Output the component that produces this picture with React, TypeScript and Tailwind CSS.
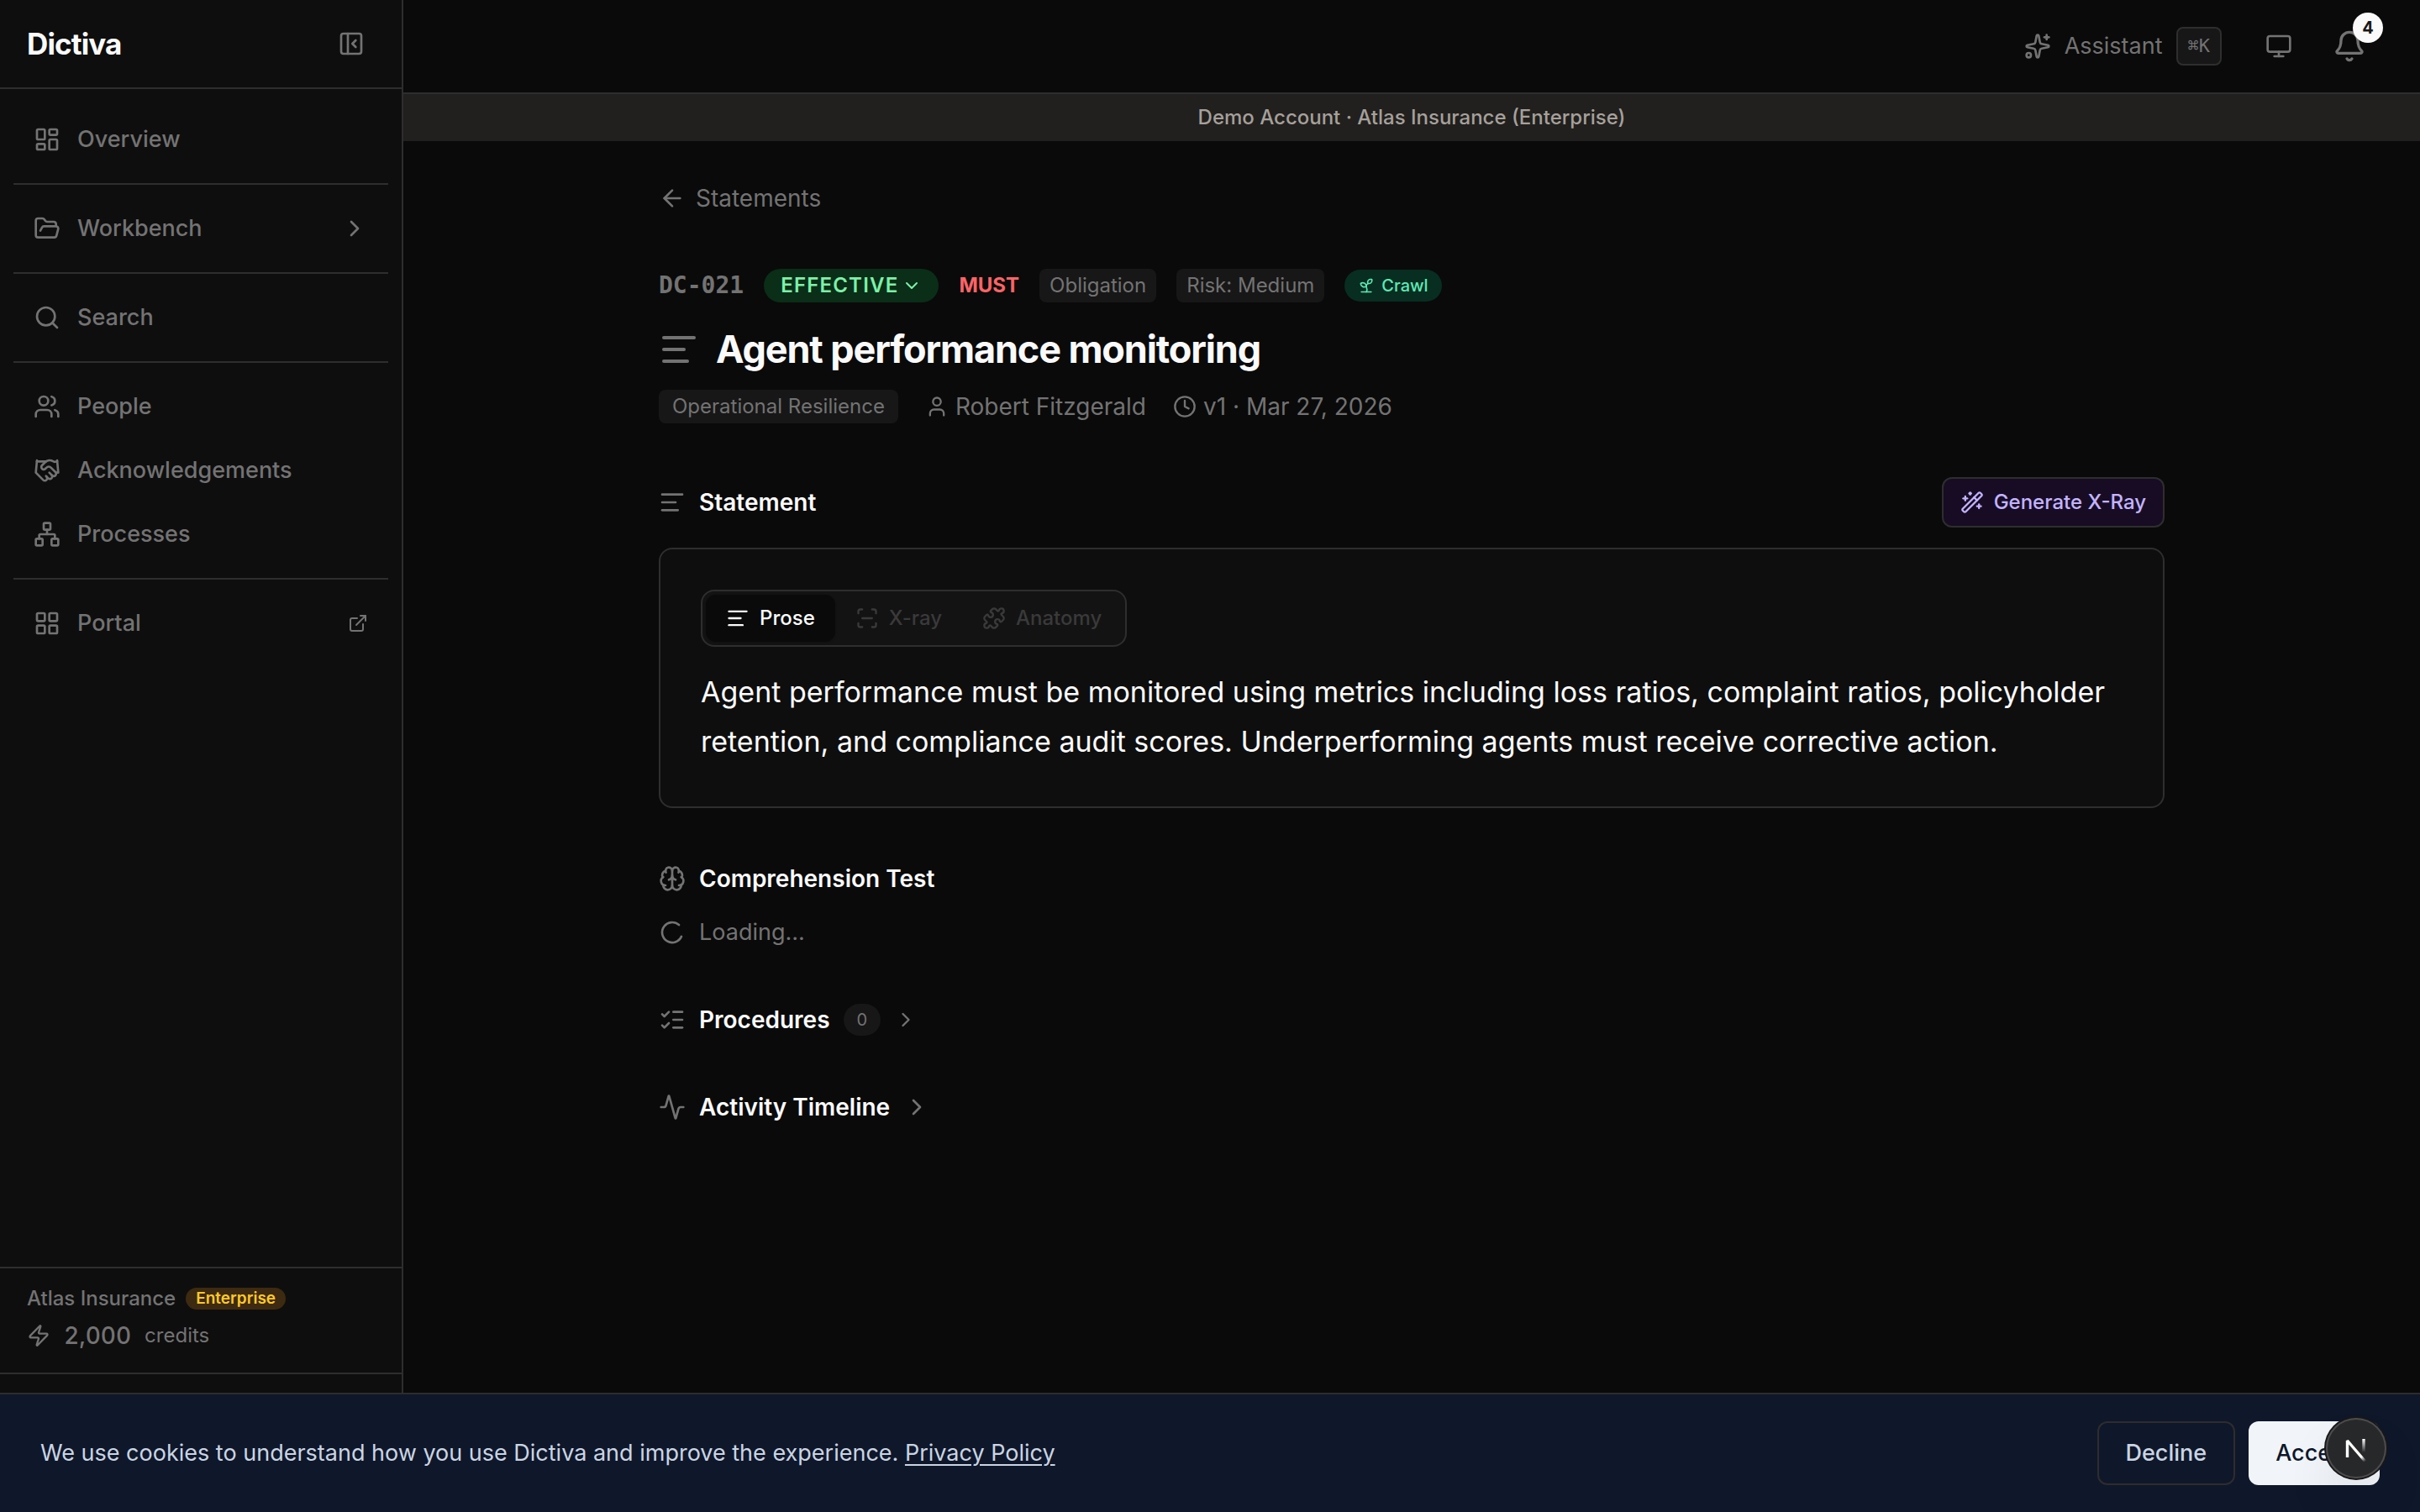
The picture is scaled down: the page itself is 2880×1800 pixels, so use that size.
import type { ReactNode } from "react";
import {
  Activity,
  ArrowLeft,
  Bell,
  Brain,
  ChevronDown,
  ChevronRight,
  Clock,
  ExternalLink,
  FolderOpen,
  Handshake,
  LayoutDashboard,
  LayoutGrid,
  ListChecks,
  LoaderCircle,
  Monitor,
  Network,
  PanelLeftClose,
  Puzzle,
  ScanLine,
  Search,
  Sparkles,
  Sprout,
  TextAlignStart,
  User,
  Users,
  WandSparkles,
  Zap,
  type LucideIcon,
} from "lucide-react";

type NavItem = { label: string; icon: LucideIcon; trailing?: ReactNode };

const navGroups: NavItem[][] = [
  [{ label: "Overview", icon: LayoutDashboard }],
  [{ label: "Workbench", icon: FolderOpen, trailing: <ChevronRight className="size-8" /> }],
  [{ label: "Search", icon: Search }],
  [
    { label: "People", icon: Users },
    { label: "Acknowledgements", icon: Handshake },
    { label: "Processes", icon: Network },
  ],
  [{ label: "Portal", icon: LayoutGrid, trailing: <ExternalLink className="size-6" /> }],
];

const views = [
  { label: "Prose", icon: TextAlignStart, active: true },
  { label: "X-ray", icon: ScanLine, active: false },
  { label: "Anatomy", icon: Puzzle, active: false },
];

function Sidebar() {
  return (
    <aside className="flex w-[480px] shrink-0 flex-col border-r-2 border-[#2e2e2e] bg-[#0e0e0e]">
      <div className="flex h-[106px] items-center justify-between border-b-2 border-[#2e2e2e] px-8">
        <a href="#" className="text-[35px] leading-10 font-bold tracking-tight text-neutral-50">
          Dictiva
        </a>
        <button type="button" aria-label="Collapse sidebar" className="p-3">
          <PanelLeftClose className="size-8" />
        </button>
      </div>

      <nav className="flex-1 px-4 py-6 text-[27px]">
        {navGroups.map((group, i) => (
          <ul
            key={group[0].label}
            className={
              i === 0
                ? "flex flex-col gap-1"
                : "mt-4 flex flex-col gap-1 border-t-2 border-[#2e2e2e] pt-4"
            }
          >
            {group.map(({ label, icon: Icon, trailing }) => (
              <li key={label}>
                <a href="#" className="flex h-[72px] items-center gap-5 rounded-xl px-6 font-medium">
                  <Icon className="size-8" />
                  <span className="flex-1">{label}</span>
                  {trailing}
                </a>
              </li>
            ))}
          </ul>
        ))}
      </nav>

      <div className="flex flex-col gap-2 border-y-2 border-[#2e2e2e] px-8 pt-5 pb-6">
        <div className="flex items-center gap-3 text-[24px] leading-8">
          <span className="font-medium">Atlas Insurance</span>
          <span className="rounded-full bg-[#3d2a10] px-3 text-[19px] leading-[26px] font-semibold text-[#ffc928]">
            Enterprise
          </span>
        </div>
        <div className="flex items-center gap-4">
          <Zap className="size-7" />
          <span className="font-medium tabular-nums">2,000</span>
          <span className="text-[24px]">credits</span>
        </div>
      </div>
      {/* room for the cookie banner */}
      <div className="h-[164px]" />
    </aside>
  );
}

function TopBar() {
  return (
    <header className="flex h-28 items-center justify-end gap-3 border-b-2 border-[#2e2e2e] px-12">
      <button type="button" className="flex items-center gap-4 px-5 text-[27px]">
        <Sparkles className="size-8" />
        <span>Assistant</span>
        <kbd className="rounded-lg border-2 border-[#2e2e2e] bg-[#171717] px-3 font-['DejaVu_Sans_Mono',monospace] text-[22px] leading-[42px]">
          ⌘K
        </kbd>
      </button>
      <button type="button" aria-label="Theme" className="flex size-[72px] items-center justify-center">
        <Monitor className="size-8" />
      </button>
      <button
        type="button"
        aria-label="Notifications"
        className="relative flex size-[72px] items-center justify-center"
      >
        <Bell className="size-10" />
        <span className="absolute -top-1 -right-1 flex size-9 items-center justify-center rounded-full bg-neutral-50 text-[20px] font-bold text-neutral-900">
          4
        </span>
      </button>
    </header>
  );
}

function SectionHeading({ icon: Icon, children }: { icon: LucideIcon; children: ReactNode }) {
  return (
    <h2 className="flex items-center gap-4 font-semibold text-neutral-50">
      <Icon className="size-8 text-[#737373]" />
      {children}
    </h2>
  );
}

function StatementHeader() {
  return (
    <div>
      <div className="flex items-center gap-6 text-[24px]">
        <span className="font-['DejaVu_Sans_Mono',monospace] text-[28px] font-bold">DC-021</span>
        <button
          type="button"
          className="flex h-10 items-center gap-1 rounded-full bg-[#0a2e17] px-5 font-semibold tracking-wider text-green-300"
        >
          EFFECTIVE
          <ChevronDown className="size-6" />
        </button>
        <span className="font-bold text-red-400">MUST</span>
        <span className="rounded-lg bg-[#171717] px-3">Obligation</span>
        <span className="rounded-lg bg-[#171717] px-3">Risk: Medium</span>
        <span className="flex h-[38px] items-center gap-2 rounded-full bg-[#082e21] px-4 text-[20px] font-medium text-emerald-300">
          <Sprout className="size-5" />
          Crawl
        </span>
      </div>

      <div className="mt-6 flex items-center gap-5">
        <TextAlignStart className="size-12" />
        <h1 className="text-[45px] leading-[64px] font-bold tracking-tight text-neutral-50">
          Agent performance monitoring
        </h1>
      </div>

      <div className="mt-4 flex items-center gap-8">
        <span className="rounded-lg bg-[#171717] px-4 text-[24px]">Operational Resilience</span>
        <span className="flex items-center gap-2">
          <User className="size-7" />
          Robert Fitzgerald
        </span>
        <span className="flex items-center gap-2">
          <Clock className="size-7" />
          v1 · Mar 27, 2026
        </span>
      </div>
    </div>
  );
}

function StatementCard() {
  return (
    <section>
      <div className="flex items-center justify-between">
        <SectionHeading icon={TextAlignStart}>Statement</SectionHeading>
        <button
          type="button"
          className="flex h-[60px] items-center gap-3 rounded-xl border-2 border-[#2e2e2e] bg-[#170c24] px-5 text-[24px] font-medium text-violet-300"
        >
          <WandSparkles className="size-7" />
          Generate X-Ray
        </button>
      </div>

      <div className="mt-6 rounded-2xl border-2 border-[#2e2e2e] bg-[#0e0e0e] p-12">
        <div
          role="tablist"
          className="inline-flex rounded-2xl border-2 border-[#2e2e2e] bg-[#131313] p-1 align-top text-[24px] font-medium"
        >
          {views.map(({ label, icon: Icon, active }) => (
            <button
              key={label}
              type="button"
              role="tab"
              aria-selected={active}
              disabled={!active}
              className={
                active
                  ? "flex h-14 items-center gap-3 rounded-xl bg-[#0a0a0a] px-6 text-neutral-50 shadow-sm"
                  : "flex h-14 items-center gap-3 rounded-xl px-6 text-[#3a3a3a]"
              }
            >
              <Icon className="size-7" />
              {label}
            </button>
          ))}
        </div>
        <p className="mt-6 text-[34px] leading-[59px] text-neutral-50">
          Agent performance must be monitored using metrics including loss ratios, complaint ratios,
          policyholder retention, and compliance audit scores. Underperforming agents must receive
          corrective action.
        </p>
      </div>
    </section>
  );
}

function CookieBanner() {
  return (
    <div className="fixed inset-x-0 bottom-0 flex items-center justify-between border-t-2 border-[#2e2d2b] bg-slate-900 px-12 py-8 text-[27px] text-slate-300">
      <p>
        We use cookies to understand how you use Dictiva and improve the experience.{" "}
        <a href="#" className="underline underline-offset-4">
          Privacy Policy
        </a>
      </p>
      <div className="flex gap-4 font-medium">
        <button type="button" className="h-[76px] rounded-xl border-2 border-[#2e2d2b] px-8">
          Decline
        </button>
        <button type="button" className="h-[76px] rounded-xl bg-slate-100 px-8 text-slate-900">
          Accept
        </button>
      </div>
    </div>
  );
}

// Floating dev tools button
function DevIndicator() {
  return (
    <button
      type="button"
      aria-label="Open dev tools"
      className="fixed right-10 bottom-10 flex size-[72px] items-center justify-center rounded-full bg-[#27282a] shadow-[0_0_0_2px_#171717,inset_0_0_0_2px_#4c4c4e,0_32px_64px_-16px_rgba(0,0,0,0.24)]"
    >
      <svg className="size-10" viewBox="0 0 40 40" fill="none">
        <defs>
          <linearGradient id="diagonal" x1="22" y1="20" x2="33" y2="34" gradientUnits="userSpaceOnUse">
            <stop stopColor="#fff" />
            <stop offset="0.6" stopColor="#fff" />
            <stop offset="1" stopColor="#fff" stopOpacity="0" />
          </linearGradient>
          <linearGradient id="stem" x1="29" y1="9" x2="29" y2="25" gradientUnits="userSpaceOnUse">
            <stop stopColor="#fff" />
            <stop offset="1" stopColor="#fff" stopOpacity="0" />
          </linearGradient>
        </defs>
        <path d="M9.5 31V11L31 36" stroke="url(#diagonal)" strokeWidth="3.4" strokeLinejoin="bevel" />
        <path d="M29 9V25" stroke="url(#stem)" strokeWidth="3.4" />
      </svg>
    </button>
  );
}

export default function App() {
  return (
    <div className="flex min-h-screen bg-[#0a0a0a] font-['Inter',sans-serif] text-[28px] leading-10 text-[#737373]">
      <Sidebar />
      <div className="min-w-0 flex-1">
        <TopBar />
        <div className="bg-[#21201e] text-center text-[24px] leading-[56px] font-medium text-stone-400">
          Demo Account · Atlas Insurance (Enterprise)
        </div>

        <main className="mx-auto flex max-w-[1792px] flex-col gap-16 py-12">
          <a href="#" className="flex items-center gap-3 self-start">
            <ArrowLeft className="size-8" />
            Statements
          </a>

          <StatementHeader />
          <StatementCard />

          <section>
            <SectionHeading icon={Brain}>Comprehension Test</SectionHeading>
            <p className="mt-6 flex items-center gap-4 text-[27px]">
              <LoaderCircle className="size-8 rotate-[24deg]" />
              Loading...
            </p>
          </section>

          <button type="button" className="flex items-center gap-4 self-start">
            <SectionHeading icon={ListChecks}>Procedures</SectionHeading>
            <span className="rounded-full bg-[#171717] px-4 text-[20px] leading-[38px]">0</span>
            <ChevronRight className="size-7" />
          </button>

          <button type="button" className="flex items-center gap-4 self-start">
            <SectionHeading icon={Activity}>Activity Timeline</SectionHeading>
            <ChevronRight className="size-8" />
          </button>
        </main>
      </div>

      <CookieBanner />
      <DevIndicator />
    </div>
  );
}
